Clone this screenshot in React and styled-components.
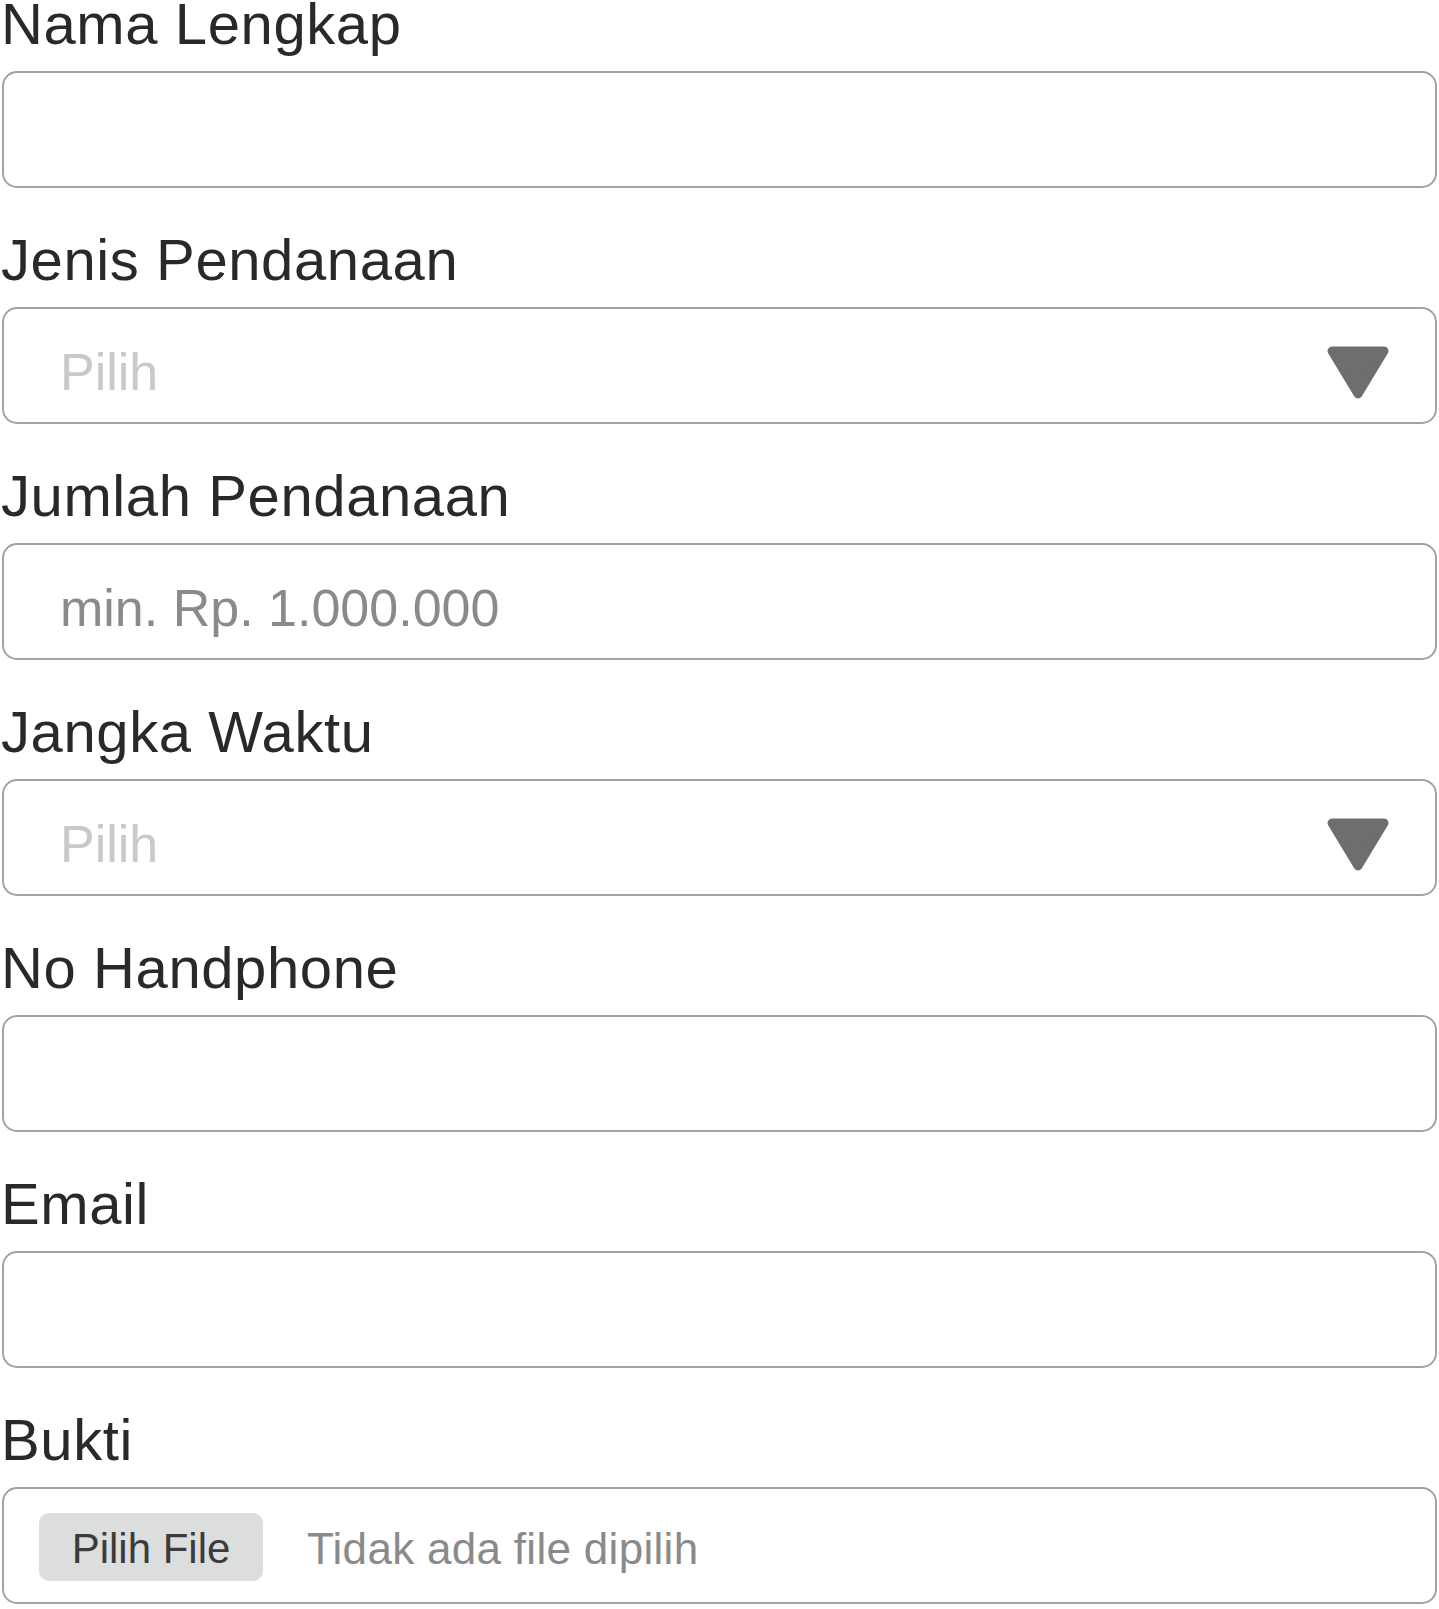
import React from "react";
import styled, { createGlobalStyle } from "styled-components";

const GlobalStyle = createGlobalStyle`
  * {
    box-sizing: border-box;
  }
  body {
    margin: 0;
    background: #ffffff;
    font-family: "Liberation Sans", Arial, sans-serif;
  }
`;

const FormContainer = styled.form`
  display: flex;
  flex-direction: column;
  gap: 48px;
  padding: 0 2px;
  width: 100%;
`;

const Field = styled.div`
  display: flex;
  flex-direction: column;
`;

const Label = styled.label`
  display: block;
  font-size: 58px;
  line-height: 47px;
  height: 47px;
  margin: 0 0 24px -1px;
  letter-spacing: 0.6px;
  color: #2a2927;
  white-space: nowrap;
`;

const Box = styled.div`
  display: flex;
  align-items: center;
  width: 100%;
  height: 117px;
  border: 2px solid #a3a3a3;
  border-radius: 15px;
  background: #ffffff;
  overflow: hidden;
`;

const TextInput = styled.input`
  flex: 1;
  height: 100%;
  border: none;
  outline: none;
  background: transparent;
  padding: 12px 0 0 56px;
  font-family: "Liberation Sans", Arial, sans-serif;
  font-size: 52px;
  color: #2a2927;

  &::placeholder {
    color: #8a8a8a;
  }
`;

const SelectText = styled.span`
  flex: 1;
  padding: 12px 0 0 56px;
  font-size: 52px;
  color: #c9c9c9;
`;

const Arrow = styled.svg`
  width: 62px;
  height: 53px;
  margin: 14px 46px 0 0;
  flex-shrink: 0;
`;

const FileButton = styled.span`
  display: flex;
  align-items: center;
  justify-content: center;
  width: 224px;
  height: 68px;
  margin: 2px 0 0 35px;
  border-radius: 10px;
  background: #dcdddd;
  color: #3b3b3b;
  font-size: 42px;
  padding-top: 4px;
`;

const FileStatus = styled.span`
  margin: 6px 0 0 44px;
  font-size: 44px;
  letter-spacing: 0.3px;
  color: #8a8a8a;
`;

const HiddenFile = styled.input`
  display: none;
`;

const SelectBox = ({ id }) => (
  <Box id={id}>
    <SelectText>Pilih</SelectText>
    <Arrow viewBox="0 0 62 53">
      <polygon
        points="5,5 57,5 31,48"
        fill="#6e6e6e"
        stroke="#6e6e6e"
        strokeWidth="9"
        strokeLinejoin="round"
      />
    </Arrow>
  </Box>
);

const App = () => {
  return (
    <>
      <GlobalStyle />
      <FormContainer onSubmit={(e) => e.preventDefault()}>
        <Field>
          <Label htmlFor="nama">Nama Lengkap</Label>
          <Box>
            <TextInput id="nama" type="text" />
          </Box>
        </Field>
        <Field>
          <Label>Jenis Pendanaan</Label>
          <SelectBox id="jenis" />
        </Field>
        <Field>
          <Label htmlFor="jumlah">Jumlah Pendanaan</Label>
          <Box>
            <TextInput id="jumlah" type="text" placeholder="min. Rp. 1.000.000" />
          </Box>
        </Field>
        <Field>
          <Label>Jangka Waktu</Label>
          <SelectBox id="jangka" />
        </Field>
        <Field>
          <Label htmlFor="hp">No Handphone</Label>
          <Box>
            <TextInput id="hp" type="tel" />
          </Box>
        </Field>
        <Field>
          <Label htmlFor="email">Email</Label>
          <Box>
            <TextInput id="email" type="email" />
          </Box>
        </Field>
        <Field>
          <Label htmlFor="bukti">Bukti</Label>
          <Box as="label" htmlFor="bukti">
            <HiddenFile id="bukti" type="file" />
            <FileButton>Pilih File</FileButton>
            <FileStatus>Tidak ada file dipilih</FileStatus>
          </Box>
        </Field>
      </FormContainer>
    </>
  );
};

export default App;
